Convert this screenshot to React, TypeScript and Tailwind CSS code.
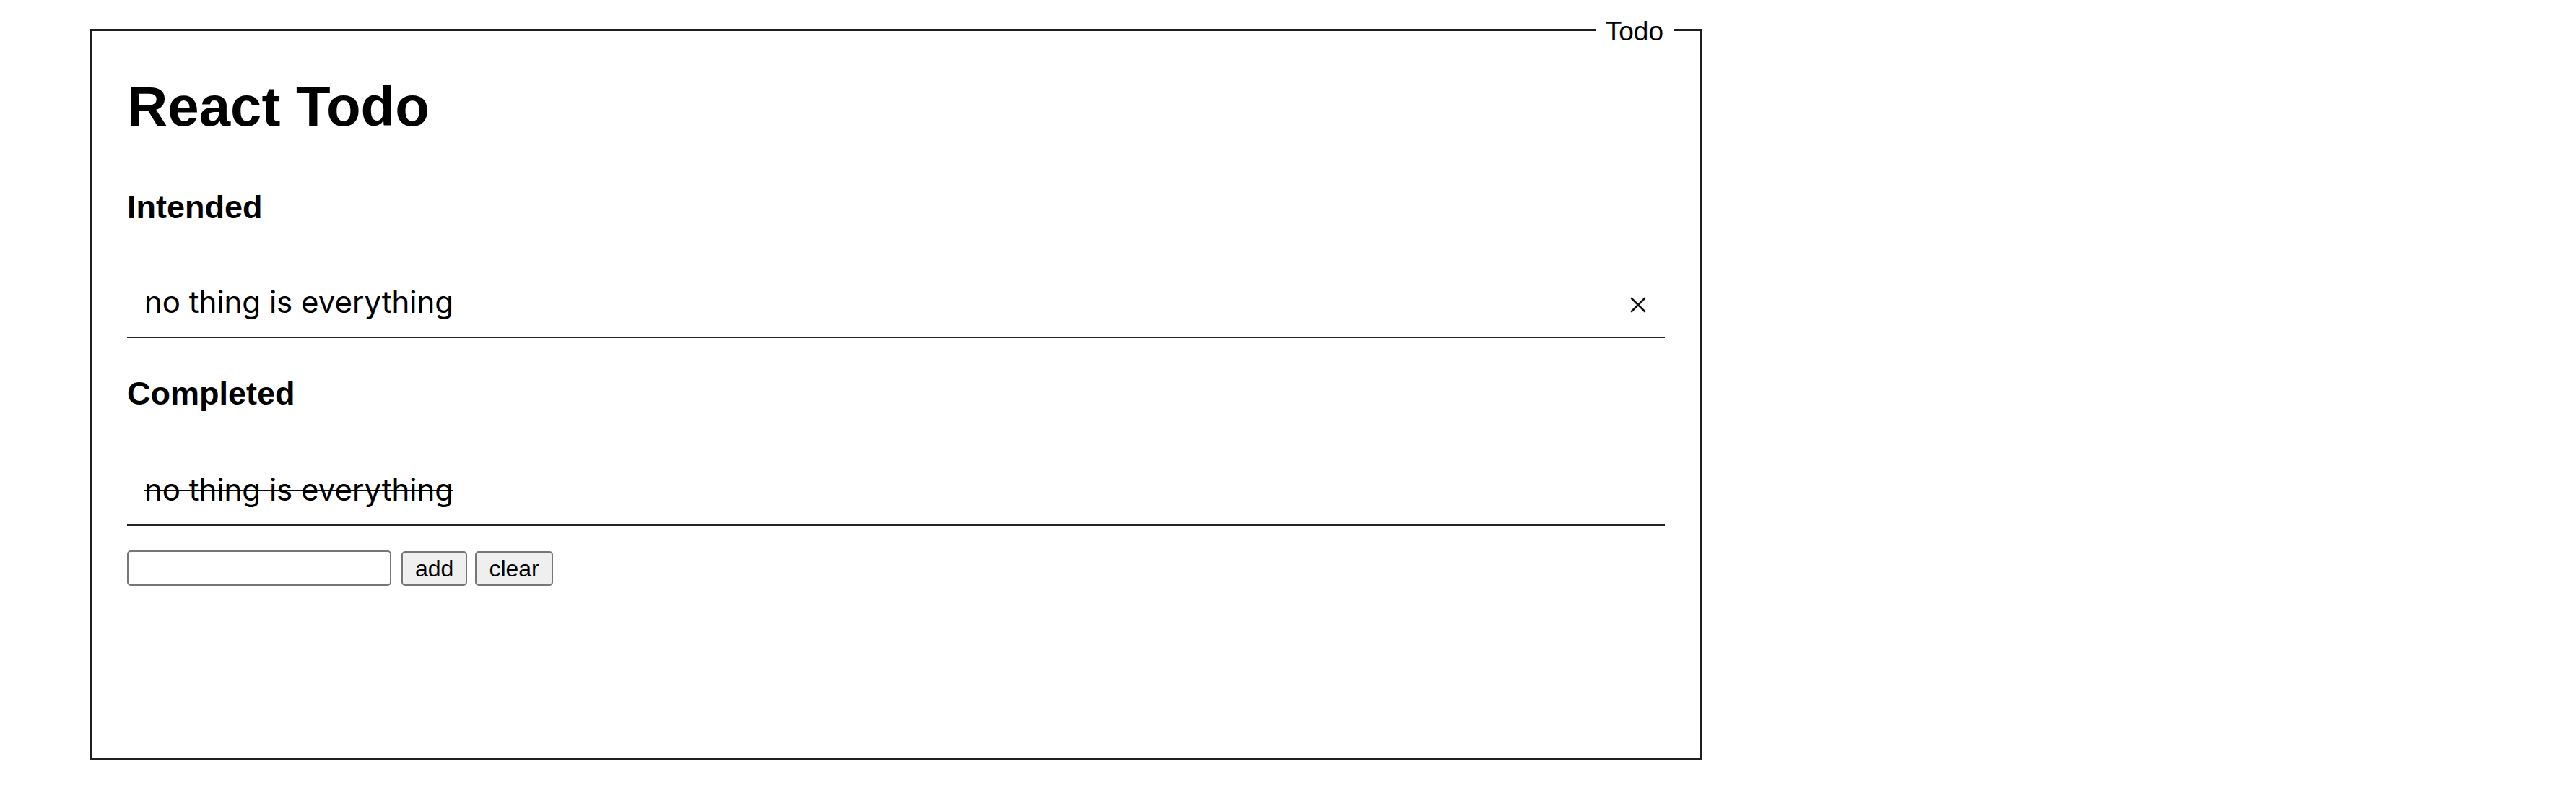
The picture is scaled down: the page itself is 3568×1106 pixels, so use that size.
import React, { useState } from "react";

type Todo = { id: number; text: string; done: boolean };

// Close glyph drawn to match the thin cross in the list row
function CloseIcon() {
    return (
        <svg width="22" height="22" viewBox="0 0 22 22" fill="none">
            <path d="M2 2 L20 20 M20 2 L2 20" stroke="#111" strokeWidth="2.6" strokeLinecap="round" />
        </svg>
    );
}

function TodoRow({ todo, onRemove }: { todo: Todo; onRemove?: () => void }) {
    return (
        <div className="flex items-center justify-between pt-[27px] pb-[27px] pl-[24px] pr-[26px] border-b-2 border-[#262626]">
            <span
                className={
                    "text-[42px] leading-none text-black font-['Inter',sans-serif] " +
                    (todo.done ? "line-through decoration-[2px]" : "")
                }
            >
                {todo.text}
            </span>
            {onRemove && (
                <button onClick={onRemove} className="mt-[8px] flex items-center justify-center">
                    <CloseIcon />
                </button>
            )}
        </div>
    );
}

export default function App() {
    const [todos, setTodos] = useState<Todo[]>([
        { id: 1, text: "no thing is everything", done: false },
        { id: 2, text: "no thing is everything", done: true },
    ]);
    const [draft, setDraft] = useState("");

    const intended = todos.filter((t) => !t.done);
    const completed = todos.filter((t) => t.done);

    const add = () => {
        if (!draft.trim()) return;
        setTodos([...todos, { id: Date.now(), text: draft, done: false }]);
        setDraft("");
    };

    return (
        <div className="w-[3568px] h-[1106px] bg-white font-['Liberation_Sans',Arial,sans-serif] text-black">
            <fieldset className="mt-[19px] ml-[125px] w-[2232px] h-[1033px] border-[3px] border-[#1f1f1f]">
                <legend className="ml-auto mr-[36px] px-[14px] pt-[5px] text-[37px] leading-[40px]">Todo</legend>
                <div className="px-[48px]">
                    <h1 className="mt-[44px] text-[78px] leading-none font-bold">React Todo</h1>

                    <h3 className="mt-[78px] text-[45px] leading-none font-bold">Intended</h3>
                    <div className="mt-[61px]">
                        {intended.map((t) => (
                            <TodoRow key={t.id} todo={t} onRemove={() => setTodos(todos.filter((x) => x.id !== t.id))} />
                        ))}
                    </div>

                    <h3 className="mt-[54px] text-[45px] leading-none font-bold">Completed</h3>
                    <div className="mt-[63px]">
                        {completed.map((t) => (
                            <TodoRow key={t.id} todo={t} />
                        ))}
                    </div>

                    {/* add / clear controls */}
                    <div className="mt-[34px] flex items-center">
                        <input
                            value={draft}
                            onChange={(e) => setDraft(e.target.value)}
                            className="w-[366px] h-[49px] border-2 border-[#767676] rounded-[5px] px-2 text-[32px]"
                        />
                        <button
                            onClick={add}
                            className="ml-[14px] h-[48px] px-[17px] text-[32px] leading-none bg-[#efefef] border-2 border-[#767676] rounded-[5px]"
                        >
                            add
                        </button>
                        <button
                            onClick={() => setTodos(todos.filter((t) => !t.done))}
                            className="ml-[11px] h-[48px] px-[17px] text-[32px] leading-none bg-[#efefef] border-2 border-[#767676] rounded-[5px]"
                        >
                            clear
                        </button>
                    </div>
                </div>
            </fieldset>
        </div>
    );
}
